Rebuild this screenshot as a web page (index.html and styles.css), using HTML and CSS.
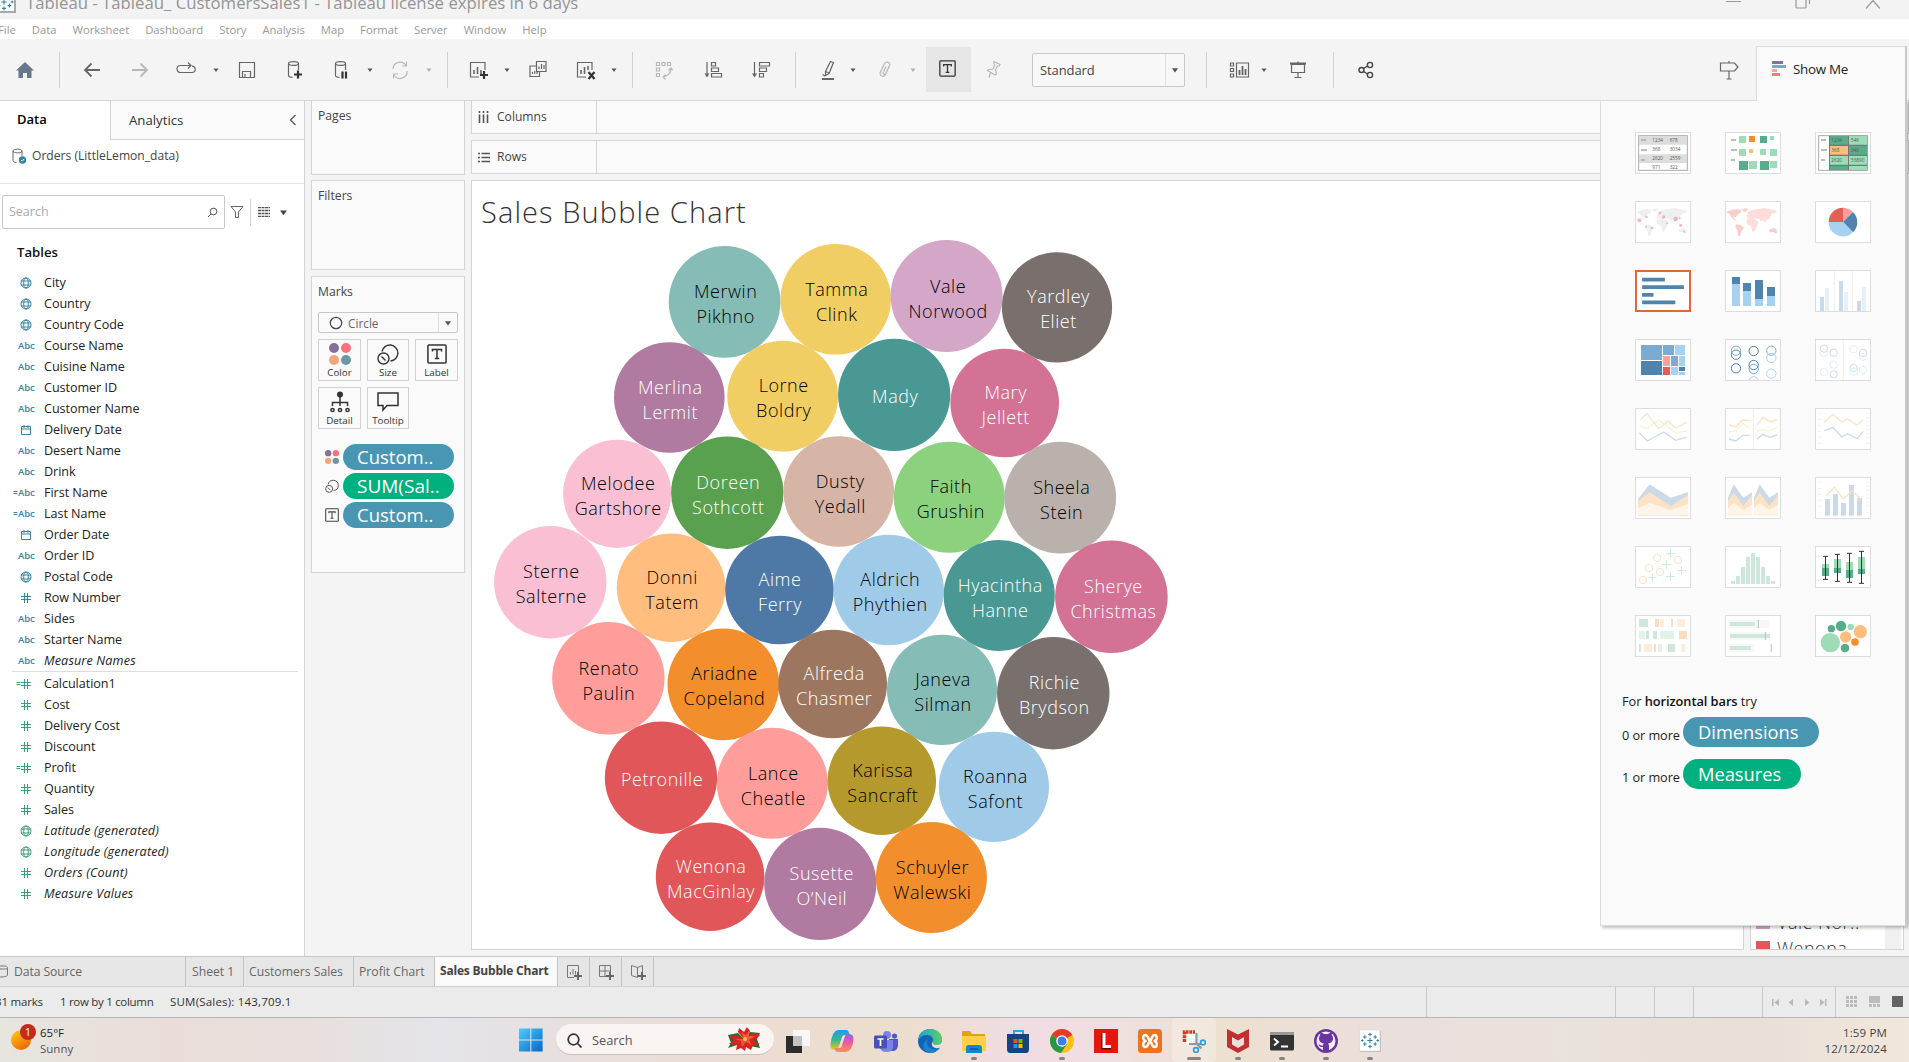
FILE: index.html
```html
<!DOCTYPE html>
<html lang="en">
<head>
<meta charset="utf-8">
<title>Tableau - Sales Bubble Chart</title>
<link rel="stylesheet" href="styles.css">
</head>
<body>
<svg class="defs" aria-hidden="true">
  <symbol id="globe" viewBox="0 0 12 12"><g fill="none" stroke="currentColor"><circle cx="6" cy="6" r="5"/><ellipse cx="6" cy="6" rx="2.3" ry="5"/><path d="M1 4h10M1 8h10"/></g></symbol>
  <symbol id="hash" viewBox="0 0 12 12"><path d="M4.5 1v10M7.5 1v10M1 4.5h10M1 7.5h10" fill="none" stroke="currentColor"/></symbol>
  <symbol id="cal" viewBox="0 0 12 12"><path d="M1.5 2.500h9v8h-9zM1.500 5h9M4 1v3M8 1v3" fill="none" stroke="currentColor"/></symbol>
  <symbol id="tri" viewBox="0 0 8 8"><path d="M1.500 2.500h5L4 6z" fill="currentColor"/></symbol>
  <symbol id="dots4" viewBox="0 0 22 22"><circle cx="5" cy="5" r="5" fill="#857299"/><circle cx="17" cy="5" r="5" fill="#fa7280"/><circle cx="5" cy="17" r="5" fill="#f3a67d"/><circle cx="17" cy="17" r="5" fill="#6d97a2"/></symbol>
  <symbol id="size" viewBox="0 0 22 22"><g fill="none" stroke="currentColor" stroke-width="1.400"><path d="M5 8.500A8 8 0 1 1 13.500 18"/><circle cx="6.500" cy="15.500" r="5.500"/><path d="M4.500 13.500l4 4"/></g></symbol>
  <symbol id="tbox" viewBox="0 0 20 20"><g fill="none" stroke="currentColor" stroke-width="1.500"><rect x="1" y="1" width="18" height="18" rx="1"/><path d="M5.500 7.500V5.500h9v2M10 5.500v9M7.800 14.500h4.400"/></g></symbol>
  <symbol id="tableau" viewBox="0 0 22 22"><g fill="none" stroke="#2f7da6" stroke-width="1.200"><path d="M11 8v6M8 11h6M11 2v4M9 4h4M11 16v4M9 18h4M5 5v4M3 7h4M17 5v4M15 7h4M5 13v4M3 15h4M17 13v4M15 15h4M2 9.500v3M.500 11h3M20 9.500v3M18.500 11h3"/></g></symbol>
</svg>

<header class="titlebar">
  <span class="app-icon"><svg width="20" height="20"><use href="#tableau"/></svg></span>
  <span class="title">Tableau - Tableau_ CustomersSales1 - Tableau license expires in 6 days</span>
  <svg class="win" width="160" height="10" viewBox="0 0 160 10"><g fill="none" stroke="#999" stroke-width="1.200"><path d="M1 1.500h15M71 -2v9q0 1 1 1h8q1 0 1-1v-9M84.500 -2v6M141 8.500l7-8 7 8"/></g></svg>
</header>
<nav class="menubar"><span>File</span><span>Data</span><span>Worksheet</span><span>Dashboard</span><span>Story</span><span>Analysis</span><span>Map</span><span>Format</span><span>Server</span><span>Window</span><span>Help</span></nav>

<div class="toolbar">
  <svg class="tool g13" viewBox="0 0 24 24"><path d="M12 4l9 8.500h-2.500V20h-4.500v-5h-4v5H5.500v-7.500H3z" fill="#67788c"/></svg>
  <i class="sep g22"></i>
  <svg class="tool g20" viewBox="0 0 24 24"><path d="M20 12H5M11.500 5.500L5 12l6.500 6.500" stroke-width="1.800"/></svg>
  <svg class="tool g24 off" viewBox="0 0 24 24"><path d="M4 12h15M12.500 5.500L19 12l-6.500 6.500" stroke-width="1.800"/></svg>
  <svg class="tool g22" viewBox="0 0 24 24"><path d="M17 14.500h1a3.200 3.200 0 0 0 0-6.400M17 7.500H6.500a3.500 3.500 0 0 0 0 7H17M14 4.500l3 3-3 3"/></svg>
  <svg class="caret g14"><use href="#tri"/></svg>
  <svg class="tool g15" viewBox="0 0 24 24"><path d="M4.500 4.500h15v15h-15zM7.500 19v-5.500h8V19M10 19v-3"/></svg>
  <svg class="tool g24" viewBox="0 0 24 24"><path d="M5.500 5.500c0-2.500 10-2.500 10 0s-10 2.500-10 0v12c0 1 2 1.800 4 1.800M15.500 5.500V12"/><path class="bold" d="M11 16.500h8M15 12.500v8"/></svg>
  <svg class="tool g22" viewBox="0 0 24 24"><path d="M6.500 5.500c0-2.500 10-2.500 10 0s-10 2.500-10 0v12c0 1 2 1.800 4 1.800M16.500 5.500V12"/><path class="bold" d="M13.500 13.500v7M17 13.500v7"/></svg>
  <svg class="caret g13"><use href="#tri"/></svg>
  <svg class="tool g14 off" viewBox="0 0 24 24"><path d="M5 11A7 7 0 0 1 18 7.500M19 13a7 7 0 0 1-13 4M18.500 3.500v4.500H14M5.500 20.500V16H10"/></svg>
  <svg class="caret g13 off"><use href="#tri"/></svg>
  <i class="sep g14"></i>
  <svg class="tool g19" viewBox="0 0 24 24"><path d="M18 12V4.500H3.500V19H12"/><path d="M7 16v-4M10.500 16V9M14 16v-4" stroke-width="1.600"/><path class="bold" d="M13 17h8M17 13v8"/></svg>
  <svg class="caret g12"><use href="#tri"/></svg>
  <svg class="tool g15" viewBox="0 0 24 24"><path d="M10.500 3.500h9.500v10h-9.500zM10.500 8H4v10.500h9.500V14M13 11V8.500M15.500 11V6M18 11V7M6.500 16v-2M8.700 16v-3M11 16v-2"/></svg>
  <svg class="tool g24" viewBox="0 0 24 24"><path d="M18 12V4.500H3.500V19H12"/><path d="M7 16v-4M10.500 16V9M14 12V8" stroke-width="1.600"/><path class="bold" d="M14.500 14l6 7M20.500 14l-6 7"/></svg>
  <svg class="caret g12"><use href="#tri"/></svg>
  <i class="sep g14"></i>
  <svg class="tool g20 off" viewBox="0 0 24 24"><path d="M3.500 4.500h3v3h-3zM9 4.500h3v3H9zM14.500 4.500h3v3h-3zM3.500 10h3v3h-3zM3.500 15.500h3v3h-3zM18 10c0 5-3 8-8 9M15.500 12.500L18 10l2 2.500M12.500 16.500L10 19l2.500 2.500"/></svg>
  <svg class="tool g24" viewBox="0 0 24 24"><path d="M6 4v14M10.500 4.500h4v3.500h-4zM10.500 10h7v3.500h-7zM10.500 15.500h10V19h-10z"/><path class="fill" d="M3.500 15.500h5L6 19.500z"/></svg>
  <svg class="tool g24" viewBox="0 0 24 24"><path d="M5.500 4v14M10.500 4.500h10V8h-10zM10.500 10h7v3.500h-7zM10.500 15.500h4V19h-4z"/><path class="fill" d="M3 15.500h5l-2.500 4z"/></svg>
  <i class="sep g22"></i>
  <svg class="tool g20" viewBox="0 0 24 24"><path d="M14.500 3.500l3 1-4.500 11-3.500 2v-4zM9.500 13.500l3.500 1.500M6.500 16.500l2.500 1.500"/><path class="fill" d="M6 20h12v2H6z"/></svg>
  <svg class="caret g9"><use href="#tri"/></svg>
  <svg class="tool g16 off" viewBox="0 0 24 24"><path d="M16 9l-4 8.500a3 3 0 0 1-5-2.500l4.500-9.500a3 3 0 0 1 5.500 1l-4.500 9.500a1.600 1.600 0 0 1-2.500-1l3-6.500"/></svg>
  <svg class="caret g12 off"><use href="#tri"/></svg>
  <div class="tbtn g9"><svg width="17" height="17"><use href="#tbox"/></svg></div>
  <svg class="tool g10 off" viewBox="0 0 24 24"><path d="M13 3.500l6 3-1 1.500-1.500 0-2 4 1 4-1.500 1-7.500-4.500 1.500-1 4-.500 1.800-4-.800-1.500zM9.500 14.500L8 19.500"/></svg>
  <div class="select g27"><span>Standard</span><i><svg width="10" height="10"><use href="#tri"/></svg></i></div>
  <i class="sep g21"></i>
  <svg class="tool g20" viewBox="0 0 24 24"><path d="M3.500 5h3v3h-3zM3.500 10.500h3v3h-3zM3.500 16h3v3h-3zM9.500 5h12v14h-12z"/><path d="M12.500 17v-5M15.500 17V8M18.500 17v-6" stroke-width="1.800"/></svg>
  <svg class="caret g9"><use href="#tri"/></svg>
  <svg class="tool g18" viewBox="0 0 24 24"><path d="M4 5.500h16" stroke-width="2"/><path d="M5.500 6.500h13v8h-13zM12 3.500v2M12 14.500v5M8.500 19.500h7"/></svg>
  <i class="sep g23"></i>
  <svg class="tool g20 dark" viewBox="0 0 24 24"><circle cx="7.500" cy="12" r="2.500"/><circle cx="16" cy="7" r="2.600"/><circle cx="16" cy="17" r="2.600"/><path d="M9.500 10.500l4-2.500M9.500 13.500l4 2.500"/></svg>
  <svg class="tool push" viewBox="0 0 24 24"><path d="M3.500 5h14l3.500 4-3.500 4H3.500zM12 3v2M12 13v8M9.500 21h5"/></svg>
  <div class="showme-tab g15"><svg width="15" height="16" viewBox="0 0 15 16"><path d="M0 0h11v3H0z" fill="#857299"/><path d="M0 4h14v3H0z" fill="#7fa6cf"/><path d="M0 8h5v3H0z" fill="#f7a98a"/><path d="M0 12h8v3H0z" fill="#fa7280"/></svg>Show Me</div>
</div>

<main class="workspace">
  <aside class="sidebar">
    <div class="side-tabs"><b>Data</b><span>Analytics<svg width="8" height="12" viewBox="0 0 8 12"><path d="M6.500 1L1.500 6l5 5" fill="none" stroke="#555" stroke-width="1.300"/></svg></span></div>
    <div class="source"><svg width="15" height="16" viewBox="0 0 15 16"><path d="M1 3c0-2.500 9-2.500 9 0s-9 2.500-9 0v9.500c0 1.300 1.500 1.800 3.500 2M10 3v5" fill="none" stroke="#666"/><circle cx="10.500" cy="12" r="3.700" fill="#3683a5"/><path d="M9 12l1.200 1.200 2-2.400" fill="none" stroke="#fff"/></svg>Orders (LittleLemon_data)</div>
    <div class="search-row">
      <div class="search">Search<svg width="11" height="11" viewBox="0 0 11 11"><g fill="none" stroke="#555"><circle cx="6.500" cy="4.500" r="3.300"/><path d="M4 7L1 10"/></g></svg></div>
      <svg width="14" height="14" viewBox="0 0 14 14"><path d="M1 1.500h12L8.500 7v5.500h-3V7z" fill="none" stroke="#666"/></svg>
      <i></i>
      <svg width="13" height="10" viewBox="0 0 13 10"><path d="M0 .500h12M0 3.500h12M0 6.500h12M0 9.500h12" stroke="#555" stroke-width="1.300" stroke-dasharray="3 .5" fill="none"/></svg>
      <svg class="dd" width="11" height="11"><use href="#tri"/></svg>
    </div>
    <h2>Tables</h2>
    <ul class="fields dims">
      <li><svg><use href="#globe"/></svg>City</li>
      <li><svg><use href="#globe"/></svg>Country</li>
      <li><svg><use href="#globe"/></svg>Country Code</li>
      <li><b>Abc</b>Course Name</li>
      <li><b>Abc</b>Cuisine Name</li>
      <li><b>Abc</b>Customer ID</li>
      <li><b>Abc</b>Customer Name</li>
      <li><svg><use href="#cal"/></svg>Delivery Date</li>
      <li><b>Abc</b>Desert Name</li>
      <li><b>Abc</b>Drink</li>
      <li><u>=</u><b>Abc</b>First Name</li>
      <li><u>=</u><b>Abc</b>Last Name</li>
      <li><svg><use href="#cal"/></svg>Order Date</li>
      <li><b>Abc</b>Order ID</li>
      <li><svg><use href="#globe"/></svg>Postal Code</li>
      <li><svg><use href="#hash"/></svg>Row Number</li>
      <li><b>Abc</b>Sides</li>
      <li><b>Abc</b>Starter Name</li>
      <li><b>Abc</b><em>Measure Names</em></li>
    </ul>
    <ul class="fields measures">
      <li><u>=</u><svg><use href="#hash"/></svg>Calculation1</li>
      <li><svg><use href="#hash"/></svg>Cost</li>
      <li><svg><use href="#hash"/></svg>Delivery Cost</li>
      <li><svg><use href="#hash"/></svg>Discount</li>
      <li><u>=</u><svg><use href="#hash"/></svg>Profit</li>
      <li><svg><use href="#hash"/></svg>Quantity</li>
      <li><svg><use href="#hash"/></svg>Sales</li>
      <li><svg><use href="#globe"/></svg><em>Latitude (generated)</em></li>
      <li><svg><use href="#globe"/></svg><em>Longitude (generated)</em></li>
      <li><svg><use href="#hash"/></svg><em>Orders (Count)</em></li>
      <li><svg><use href="#hash"/></svg><em>Measure Values</em></li>
    </ul>
  </aside>

  <section class="cards">
    <div class="card pages">Pages</div>
    <div class="card filters">Filters</div>
    <div class="card marks">Marks
      <div class="mark-type"><svg width="14" height="14" viewBox="0 0 14 14"><circle cx="7" cy="7" r="5.700" fill="none" stroke="#444" stroke-width="1.200"/></svg><span>Circle</span><i><svg width="10" height="10"><use href="#tri"/></svg></i></div>
      <div class="mark-grid">
        <div><svg><use href="#dots4"/></svg>Color</div>
        <div><svg><use href="#size"/></svg>Size</div>
        <div><svg viewBox="-1 -1 24 24"><use href="#tbox" x="0" y="0" width="22" height="22"/></svg>Label</div>
        <div><svg viewBox="0 0 22 22"><circle cx="11" cy="3.500" r="3" fill="#333"/><path d="M11 6v9M3.500 15v-3.500h15V15" fill="none" stroke="#333" stroke-width="1.500"/><g fill="none" stroke="#333" stroke-width="1.500"><circle cx="3.500" cy="19" r="1.600"/><circle cx="11" cy="19" r="1.600"/><circle cx="18.500" cy="19" r="1.600"/></g></svg>Detail</div>
        <div><svg viewBox="0 0 22 22"><path d="M1 2h20v12.500H10L6 19v-4.500H1z" fill="none" stroke="#333" stroke-width="1.500"/></svg>Tooltip</div>
      </div>
      <div class="pill-row"><svg><use href="#dots4"/></svg><span class="pill">Custom..</span></div>
      <div class="pill-row"><svg><use href="#size"/></svg><span class="pill green">SUM(Sal..</span></div>
      <div class="pill-row"><svg><use href="#tbox"/></svg><span class="pill">Custom..</span></div>
    </div>
  </section>

  <section class="canvas">
    <div class="shelf"><div><svg width="11" height="12" viewBox="0 0 11 12"><path d="M1.500 0v2M5.500 0v2M9.500 0v2M1.500 3.500V12M5.500 3.500V12M9.500 3.500V12" stroke="#555" stroke-width="1.600"/></svg>Columns</div></div>
    <div class="shelf"><div><svg width="12" height="11" viewBox="0 0 12 11"><path d="M0 1.500h2M0 5.500h2M0 9.500h2M3.500 1.500H12M3.500 5.500H12M3.500 9.500H12" stroke="#555" stroke-width="1.600"/></svg>Rows</div></div>
    <div class="view-row">
      <div class="view">
        <h1>Sales Bubble Chart</h1>
        <svg class="bubbles" width="700" height="710" viewBox="480 235 700 710">
          <g class="d" transform="translate(724.600 301.800)"><circle r="55.900" fill="#86bcb6"/><text x="1" y="-3.500">Merwin</text><text x="1" y="21.500">Pikhno</text></g>
          <g class="d" transform="translate(835.700 299.300)"><circle r="55.300" fill="#f1ce63"/><text x="1" y="-3.500">Tamma</text><text x="1" y="21.500">Clink</text></g>
          <g class="d" transform="translate(946.600 296)"><circle r="56" fill="#d4a6c8"/><text x="1.500" y="-3.500">Vale</text><text x="1.500" y="21.500">Norwood</text></g>
          <g class="l" transform="translate(1057 307.300)"><circle r="55.100" fill="#79706e"/><text x="1.500" y="-4">Yardley</text><text x="1.500" y="21">Eliet</text></g>
          <g class="l" transform="translate(669.300 397.500)"><circle r="55.300" fill="#b07aa1"/><text x="1" y="-3.500">Merlina</text><text x="1" y="21.500">Lermit</text></g>
          <g class="d" transform="translate(782.700 396.200)"><circle r="55.400" fill="#f1ce63"/><text x="1" y="-4">Lorne</text><text x="1" y="21">Boldry</text></g>
          <g class="l" transform="translate(894.200 394.800)"><circle r="56.100" fill="#499894"/><text x="1" y="8.500">Mady</text></g>
          <g class="l" transform="translate(1004.700 403)"><circle r="54.300" fill="#d37295"/><text x="1" y="-4">Mary</text><text x="1" y="21">Jellett</text></g>
          <g class="d" transform="translate(617.200 493.800)"><circle r="54.100" fill="#fabfd2"/><text x="1" y="-3.500">Melodee</text><text x="1" y="21.500">Gartshore</text></g>
          <g class="l" transform="translate(727.300 492.700)"><circle r="56.200" fill="#59a14f"/><text x="1" y="-3.500">Doreen</text><text x="1" y="21.500">Sothcott</text></g>
          <g class="d" transform="translate(838.700 491.500)"><circle r="55.300" fill="#d7b5a6"/><text x="1.500" y="-3.500">Dusty</text><text x="1.500" y="21.500">Yedall</text></g>
          <g class="d" transform="translate(949.300 497.200)"><circle r="55.500" fill="#8cd17d"/><text x="1.500" y="-4">Faith</text><text x="1.500" y="21">Grushin</text></g>
          <g class="d" transform="translate(1060.200 497.700)"><circle r="55.900" fill="#bab0ac"/><text x="1.500" y="-3.500">Sheela</text><text x="1.500" y="21.500">Stein</text></g>
          <g class="d" transform="translate(550.300 582.200)"><circle r="56.200" fill="#fabfd2"/><text x="1" y="-4">Sterne</text><text x="1" y="21">Salterne</text></g>
          <g class="d" transform="translate(671.100 587.700)"><circle r="54.300" fill="#ffbe7d"/><text x="1" y="-3.500">Donni</text><text x="1" y="21.500">Tatem</text></g>
          <g class="l" transform="translate(779.500 590)"><circle r="54.300" fill="#4e79a7"/><text x=".5" y="-4">Aime</text><text x=".5" y="21">Ferry</text></g>
          <g class="d" transform="translate(888.700 590)"><circle r="55.200" fill="#a0cbe8"/><text x="1.500" y="-4">Aldrich</text><text x="1.500" y="21">Phythien</text></g>
          <g class="l" transform="translate(999.200 595.500)"><circle r="55.600" fill="#499894"/><text x="1" y="-3.500">Hyacintha</text><text x="1" y="21.500">Hanne</text></g>
          <g class="l" transform="translate(1111.400 596.800)"><circle r="56.300" fill="#d37295"/><text x="2" y="-3.500">Sherye</text><text x="2" y="21.500">Christmas</text></g>
          <g class="d" transform="translate(608.400 678.300)"><circle r="56.200" fill="#ff9d9a"/><text x=".5" y="-3.500">Renato</text><text x=".5" y="21.500">Paulin</text></g>
          <g class="d" transform="translate(723.400 684.300)"><circle r="55.900" fill="#f28e2b"/><text x="1" y="-4">Ariadne</text><text x="1" y="21">Copeland</text></g>
          <g class="l" transform="translate(832.700 684)"><circle r="54.300" fill="#9d7660"/><text x="1.500" y="-4">Alfreda</text><text x="1.500" y="21">Chasmer</text></g>
          <g class="d" transform="translate(942 689.800)"><circle r="55.100" fill="#86bcb6"/><text x="1" y="-3.500">Janeva</text><text x="1" y="21.500">Silman</text></g>
          <g class="l" transform="translate(1053.300 693.200)"><circle r="56.200" fill="#79706e"/><text x="1" y="-4">Richie</text><text x="1" y="21">Brydson</text></g>
          <g class="l" transform="translate(661 777.700)"><circle r="56.200" fill="#e15759"/><text x="1" y="8.500">Petronille</text></g>
          <g class="d" transform="translate(772.300 783.300)"><circle r="55.500" fill="#ff9d9a"/><text x="1" y="-3.500">Lance</text><text x="1" y="21.500">Cheatle</text></g>
          <g class="d" transform="translate(881.800 780.700)"><circle r="54.300" fill="#b6992d"/><text x="1" y="-3.500">Karissa</text><text x="1" y="21.500">Sancraft</text></g>
          <g class="d" transform="translate(993.900 786.800)"><circle r="55.100" fill="#a0cbe8"/><text x="1.500" y="-3.500">Roanna</text><text x="1.500" y="21.500">Safont</text></g>
          <g class="l" transform="translate(710.100 876.700)"><circle r="54.300" fill="#e15759"/><text x="1" y="-3.500">Wenona</text><text x="1" y="21.500">MacGinlay</text></g>
          <g class="l" transform="translate(820.300 883.800)"><circle r="56.100" fill="#b07aa1"/><text x="1.500" y="-3.500">Susette</text><text x="1.500" y="21.500">O’Neil</text></g>
          <g class="d" transform="translate(931.400 877.500)"><circle r="55.500" fill="#f28e2b"/><text x="1" y="-3.500">Schuyler</text><text x="1" y="21.500">Walewski</text></g>
        </svg>
      </div>
      <div class="legend">
        <div class="legend-list"><p><i class="sw-vale"></i>Vale Nor..</p><p><i class="sw-wen"></i>Wenona</p></div>
        <div class="scroll"></div>
      </div>
    </div>
  </section>

  <aside class="showme">
    <div class="thumbs">
      <svg viewBox="3 3 162 120"><rect x="11" y="11" width="146" height="104" fill="#fff" stroke="#aaa" stroke-width="3"/><path d="M12 12h144v26H12zM12 67h144v26H12z" fill="#ddd"/><path d="M18 24h15M18 54h18M18 84h12" stroke="#aaa" stroke-width="5"/><g class="tiny"><text x="52" y="31">1234</text><text x="104" y="31">678</text><text x="52" y="58">368</text><text x="104" y="58">3034</text><text x="52" y="85">2620</text><text x="104" y="85">2559</text><text x="52" y="110">971</text><text x="104" y="110">322</text></g></svg>
      <svg viewBox="3 3 162 120"><path d="M18 24h15M18 54h18M18 84h12" stroke="#bbb" stroke-width="6"/><path d="M42 12h21v21H42zM135 12h12v12h-12zM42 51h21v21H42zM105 51h18v18h-18zM135 51h21v21h-21zM72 87h24v24H72zM135 87h21v21h-21z" fill="#9edcb6"/><path d="M105 12h21v21h-21zM42 87h27v27H42zM105 87h27v27h-27z" fill="#57ac8a"/><path d="M72 12h18v18H72z" fill="#f28e2b"/><path d="M72 51h12v12H72z" fill="#ffbe7d"/></svg>
      <svg viewBox="3 3 162 120"><rect x="11" y="11" width="146" height="104" fill="#fff" stroke="#aaa" stroke-width="3"/><path d="M18 24h15M18 54h18M18 84h12" stroke="#bbb" stroke-width="6"/><path d="M42 11h115v104H42z" fill="#777"/><path d="M45 12h54v26H45zM102 42h54v26h-54zM45 102h54v12H45z" fill="#57ac8a"/><path d="M102 12h54v26h-54zM45 72h54v26H45zM102 72h54v26h-54zM102 102h54v12h-54z" fill="#9edcb6"/><path d="M45 42h54v26H45z" fill="#ffbe7d"/><g class="tiny"><text x="49" y="30">1234</text><text x="108" y="30">546</text><text x="49" y="61">368</text><text x="108" y="61">340</text><text x="49" y="91">2620</text><text x="108" y="91">53890</text></g></svg>

      <svg viewBox="3 3 162 120"><path d="M5 33l15-7 17-2 12 3-2 8-8 4-6 9-9 0 7 8 6 5-6-2-11-9-6-12-8-2zM50 24l16-2 4 3-9 8-6-2zM34 70l12 2 11 8-7 10-5 14-5 2-3-18-6-10z" fill="#efefef"/><path d="M69 33l12-6 18-3 20-3 18 4 19 4-4 7-13 3-6 15-8 2-3 7-5-1-4-8-5 9-5-8-13-4-6 3-8-1-6-3-6 3zM68 53l15-1 9 4 8 7-4 13-6 12-7 6-5-19-10-5-4-9zM132 86l15-6 8 6 1 9-5 2-6-4-12 1z" fill="#efefef"/><g fill="#e8929b" opacity=".6"><circle cx="13" cy="58" r="6"/><circle cx="75" cy="36" r="4"/><circle cx="86" cy="48" r="5"/><circle cx="122" cy="54" r="7"/><circle cx="137" cy="73" r="5"/><circle cx="33" cy="77" r="3"/><circle cx="51" cy="81" r="4"/><circle cx="96" cy="67" r="3"/><circle cx="134" cy="52" r="3"/><circle cx="147" cy="92" r="3"/><circle cx="34" cy="48" r="4"/></g></svg>
      <svg viewBox="3 3 162 120"><path d="M5 33l15-7 17-2 12 3-2 8-8 4-6 9-9 0 7 8 6 5-6-2-11-9-6-12-8-2zM50 24l16-2 4 3-9 8-6-2zM34 70l12 2 11 8-7 10-5 14-5 2-3-18-6-10zM132 86l15-6 8 6 1 9-5 2-6-4-12 1z" fill="#f9cdc9"/><path d="M69 33l12-6 18-3 20-3 18 4 19 4-4 7-13 3-6 15-8 2-3 7-5-1-4-8-5 9-5-8-13-4-6 3-8-1-6-3-6 3zM68 53l15-1 9 4 8 7-4 13-6 12-7 6-5-19-10-5-4-9z" fill="#fddcd9"/></svg>
      <svg viewBox="3 3 162 120"><path d="M84 63V20a43 43 0 0 0-43 43z" fill="#e16158"/><path d="M84 63V20a43 43 0 0 1 30 13z" fill="#ff9d9a"/><path d="M84 63l30-30a43 43 0 0 1 0 61z" fill="#4f84ae"/><path d="M84 63l30 31a43 43 0 0 1-73-31z" fill="#a6d1f0"/></svg>

      <svg class="on" viewBox="3 3 162 120"><path d="M18 21h72v12H18zM18 45h132v12H18zM18 69h36v12H18zM18 93h105v12H18z" fill="#4f84ae"/></svg>
      <svg viewBox="3 3 162 120"><path d="M21 42h24v66H21zM54 63h24v45H54zM90 87h24v21H90zM126 78h24v30h-24z" fill="#a6d1f0"/><path d="M21 21h24v21H21zM54 39h24v24H54zM90 30h24v57H90zM126 51h24v27h-24z" fill="#4f84ae"/></svg>
      <svg viewBox="3 3 162 120"><path d="M58 0v126M112 0v126" stroke="#eee" stroke-width="3"/><path d="M15 81h12v45H15zM72 33h12v93H72zM126 93h12v33h-12z" fill="#cbdae8"/><path d="M30 54h12v72H30zM87 66h12v60H87zM141 51h12v75h-12z" fill="#e3f1fd"/></svg>

      <svg viewBox="3 3 162 120"><path d="M18 18h63v45H18zM84 18h33v30H84zM108 51h21v30h-21z" fill="#7daacf"/><path d="M18 66h63v42H18zM132 84h18v12h-18z" fill="#4f84ae"/><path d="M120 18h30v30h-30zM132 51h18v30h-18zM108 84h21v24h-21zM132 99h18v9h-18z" fill="#a6d1f0"/><path d="M84 51h21v30H84z" fill="#ffa09c"/><path d="M84 84h21v24H84z" fill="#e15f58"/></svg>
      <svg viewBox="3 3 162 120"><g class="rings"><g stroke="#7daacf"><circle cx="33" cy="35" r="14"/><circle cx="86" cy="90" r="14"/><circle cx="139" cy="35" r="14"/></g><g stroke="#4f84ae"><circle cx="33" cy="47" r="14"/><circle cx="33" cy="88" r="14"/><circle cx="86" cy="36" r="14"/><circle cx="86" cy="78" r="14"/></g><g stroke="#a6d1f0"><circle cx="139" cy="57" r="14"/><circle cx="139" cy="104" r="14"/><circle cx="86" cy="127" r="14"/></g></g></svg>
      <svg viewBox="3 3 162 120"><path d="M85 0v126" stroke="#eee" stroke-width="3"/><g class="rings" stroke="#cbdae8"><circle cx="27" cy="29" r="11"/><circle cx="56" cy="41" r="11"/><circle cx="56" cy="106" r="11"/><circle cx="144" cy="42" r="11"/><circle cx="116" cy="87" r="11"/></g><g class="rings" stroke="#e0effb"><circle cx="27" cy="42" r="11"/><circle cx="56" cy="77" r="11"/><circle cx="27" cy="99" r="11"/><circle cx="116" cy="31" r="11"/><circle cx="144" cy="53" r="11"/><circle cx="144" cy="93" r="11"/><circle cx="116" cy="98" r="11"/></g></svg>

      <svg viewBox="3 3 162 120"><g class="lines"><path d="M13 53l24 9 34-27 51 40 33-6" stroke="#fdf0d5"/><path d="M16 35l20-18 35 45 29-23 22 21 32-17" stroke="#fde2c5"/><path d="M13 75l24 24 49-27 36 25 32-9" stroke="#cbdae8"/></g></svg>
      <svg viewBox="3 3 162 120"><path d="M85 0v126" stroke="#eee" stroke-width="3"/><g class="lines"><path d="M12 72l20-3 21-23 20 14M96 70l17-6 20 5 24-12" stroke="#fdf0d5"/><path d="M12 51l22 5 18-20 22 2M96 51l18-23 20 13 22-5" stroke="#fde2c5"/><path d="M12 93l20 6 22-17h20M96 93l18-14 20 9 22-7" stroke="#cbdae8"/></g></svg>
      <svg viewBox="3 3 162 120"><path d="M9 16h9M9 34h9M9 52h9M9 70h9M9 88h9M9 106h9M153 16h9M153 28h9M153 40h9M153 52h9M153 64h9M153 76h9M153 88h9M153 106h9" stroke="#eee" stroke-width="3"/><g class="lines"><path d="M27 43l27-24 27 23 17-10 28 19 19-16" stroke="#fde2c5"/><path d="M27 69l27-11 26 29 18-10 28 15 19-22" stroke="#cbdae8"/></g></svg>

      <svg viewBox="3 3 162 120"><path d="M9 66l35-44 63 40 52-16v70H9z" fill="#cbdae8"/><path d="M9 72l35-26 63 41 52-33v61H9z" fill="#fde2c5"/><path d="M9 93l35-15 63 21 52-18v34H9z" fill="#fef5e8"/></svg>
      <svg viewBox="3 3 162 120"><path d="M9 62l17-40 29 40 26-16v69H9zM87 62l17-40 29 40 26-16v69H87z" fill="#cbdae8"/><path d="M9 72l17-26 29 41 26-33v61H9zM87 72l17-26 29 41 26-33v61H87z" fill="#fde2c5"/><path d="M9 93l17-15 29 21 26-16v32H9zM87 93l17-15 29 21 26-16v32H87z" fill="#fef5e8"/></svg>
      <svg viewBox="3 3 162 120"><path d="M9 16h9M9 34h9M9 52h9M9 70h9M9 88h9M9 106h9M153 16h9M153 28h9M153 40h9M153 52h9M153 64h9M153 76h9M153 88h9M153 106h9" stroke="#eee" stroke-width="3"/><path d="M30 66h15v50H30zM54 51h15v65H54zM78 78h15v38H78zM102 24h15v92h-15zM126 63h15v53h-15z" fill="#cbdae8"/><g class="lines"><path d="M33 56l26-26 26 37 26-26 27 26" stroke="#fde2c5"/></g></svg>

      <svg viewBox="3 3 162 120"><g class="rings" stroke="#fde2c5"><circle cx="66" cy="36" r="11"/><circle cx="129" cy="42" r="11"/><circle cx="42" cy="66" r="11"/><circle cx="75" cy="78" r="11"/><circle cx="24" cy="102" r="11"/></g><path d="M93 23h27M106 9v27M81 56h27M94 42v27M126 74h27M139 60v27M39 95h27M52 81v27M93 92h27M106 78v27" stroke="#cde7db" stroke-width="3"/></svg>
      <svg viewBox="3 3 162 120"><path d="M18 105h12v9H18zM33 90h12v24H33zM48 63h12v51H48zM63 33h12v81H63zM78 21h12v93H78zM93 33h12v81H93zM108 63h12v51h-12zM123 90h12v24h-12zM138 105h12v9h-12z" fill="#cde7db"/></svg>
      <svg viewBox="3 3 162 120"><path d="M21 54h21v12H21zM57 39h21v27H57zM93 48h21v24H93zM129 33h21v36h-21z" fill="#9edcb6"/><path d="M21 66h21v24H21zM57 66h21v15H57zM93 72h21v24H93zM129 69h21v15h-21z" fill="#57ac8a"/><path d="M31.500 31v69M24 31h15M24 100h15M67.500 25v81M60 25h15M60 106h15M103.500 22v87M96 22h15M96 109h15M139.500 16v96M132 16h15M132 112h15" stroke="#333" stroke-width="3"/></svg>

      <svg viewBox="3 3 162 120"><path d="M12 12h27v24H12zM33 48h9v24h-9zM54 48h12v24H54zM12 87h6v24h-6zM99 87h21v24H99z" fill="#cde7db"/><path d="M12 48h18v24H12zM75 48h42v24H75zM69 87h12v24H69z" fill="#e2f3e9"/><path d="M60 12h12v24H60zM108 12h6v24h-6zM132 48h24v24h-24zM57 87h6v24h-6z" fill="#fcdcc0"/><path d="M75 12h12v24H75zM126 12h24v24h-24zM27 87h24v24H27zM138 87h12v24h-12z" fill="#feecd9"/></svg>
      <svg viewBox="3 3 162 120"><path d="M15 15h120v24H15zM15 51h120v24H15zM15 87h75v24H15z" fill="#f7f7f7"/><path d="M15 21h75v12H15zM15 57h120v12H15zM15 93h63v12H15z" fill="#cde7db"/><path d="M100 15v24M121 51v24M139 87v24" stroke="#bbb" stroke-width="3"/></svg>
      <svg viewBox="3 3 162 120"><g fill="#57ac8a"><circle cx="49" cy="41" r="11"/><circle cx="78" cy="33" r="15.500"/><circle cx="90" cy="99" r="13"/></g><g fill="#9edcb6"><circle cx="46" cy="83" r="29"/><circle cx="107" cy="36" r="9.500"/></g><g fill="#ffbe7d"><circle cx="92" cy="66" r="17"/><circle cx="136" cy="50" r="20"/></g><circle cx="120" cy="81" r="11.500" fill="#f28e2b"/></svg>
    </div>
    <p class="hint">For <b>horizontal bars</b> try</p>
    <p class="need"><span>0 or more</span><span class="pill big">Dimensions</span></p>
    <p class="need"><span>1 or more</span><span class="pill big green ms">Measures</span></p>
  </aside>
</main>

<nav class="sheets">
  <span class="ds"><svg width="8" height="13" viewBox="0 0 8 13"><path d="M0 1h4c4 0 4 2 3.500 2.500S6 4 0 4M7.500 3v7c0 1-2 2-7.500 2" fill="none" stroke="#777"/></svg>Data Source</span><span class="s1">Sheet 1</span><span class="s2">Customers Sales</span><span class="s3">Profit Chart</span><b>Sales Bubble Chart</b>
  <span class="add"><svg viewBox="0 0 16 16"><path d="M12.500 8V1.500H1.500v12H8M4.500 10.500V8M7 10.500V5M9.500 10.500V7"/><path class="bold" d="M8 12h8M12 8v8"/></svg></span>
  <span class="add"><svg viewBox="0 0 16 16"><path d="M12.500 8V1.500H1.500v11H8M7 1.500v11M1.500 7h11"/><path class="bold" d="M8 12h8M12 8v8"/></svg></span>
  <span class="add"><svg viewBox="0 0 16 16"><path d="M12.500 8V1.500l-5 2-6-2v10l6 2v-10"/><path class="bold" d="M8 12h8M12 8v8"/></svg></span>
</nav>
<footer class="status">
  <span>31 marks</span><span class="rowcol">1 row by 1 column</span><span class="sum">SUM(Sales): 143,709.1</span>
  <div class="status-right">
    <i class="w189"></i><i class="w39"></i><i class="w39"></i><i class="w68"></i>
    <div class="nav"><svg width="55" height="9" viewBox="0 0 55 9"><path d="M0 1h1.500v7H0zM7 1v7L2.500 4.500zM21 1v7l-4.500-3.500zM33 1v7l4.500-3.500zM48 1v7l4.500-3.500zM53 1h1.500v7H53z" fill="#b8b8b8"/></svg></div>
    <div class="modes"><svg width="58" height="12" viewBox="0 0 58 12"><path d="M0 0h3v3H0zM4 0h3v3H4zM8 0h3v3H8zM0 4h3v3H0zM4 4h3v3H4zM8 4h3v3H8zM0 8h3v3H0zM4 8h3v3H4zM8 8h3v3H8zM23 0h11v7H23zM23 8h3v3h-3zM27 8h3v3h-3zM31 8h3v3h-3z" fill="#bbb"/><path d="M46 0h11v11H46z" fill="#636363"/></svg></div>
  </div>
</footer>

<div class="taskbar">
  <div class="weather"><svg width="27" height="30" viewBox="0 0 27 30"><defs><linearGradient id="sun" x1="0" y1="0" x2=".6" y2="1"><stop offset="0" stop-color="#ffcf15"/><stop offset="1" stop-color="#ec6a08"/></linearGradient></defs><circle cx="10" cy="17" r="10" fill="url(#sun)"/><circle cx="17" cy="9" r="8" fill="#c42b1c"/><text x="17" y="13" text-anchor="middle" font-size="11" fill="#fff">1</text></svg><div>65°F<br><span>Sunny</span></div></div>
  <svg class="start" width="24" height="24" viewBox="0 0 24 24"><defs><linearGradient id="win" x1="0" y1="0" x2="1" y2="1"><stop offset="0" stop-color="#51cdfb"/><stop offset="1" stop-color="#0067c8"/></linearGradient></defs><path d="M0 .500h11.300v11H0zM12.300.500h11.300v11H12.300zM0 12.500h11.300v11H0zM12.300 12.500h11.300v11H12.300z" fill="url(#win)"/></svg>
  <div class="tsearch"><svg width="15" height="15" viewBox="0 0 15 15"><g fill="none" stroke="#333" stroke-width="1.700"><circle cx="6.500" cy="6.500" r="5.300"/><path d="M10.500 10.500l4 4"/></g></svg>Search
    <svg class="flower" width="36" height="24" viewBox="0 0 36 24"><path d="M2 8l10-2 6 6-7 6-9 3 3-5zM24 5l10 1-3 6 3 9-10-2-6-7z" fill="#2c6a35"/><path d="M18 12L12 5l1-4 5 4 3-5 3 4-2 5 7-3 5 2-6 6 6 3-7 1-2 5-5-3-1 4-4-3-5 2 1-5-8-1 5-4-5-4 7-1z" fill="#d8231f"/><path d="M18 12l-3-7 5 3 3-4 0 5 6 0-6 4 3 5-6-3-4 5-1-6-6-2z" fill="#f4553f"/><circle cx="19" cy="12" r="2" fill="#e8c13a"/></svg></div>
  <div class="apps">
    <div><svg viewBox="0 0 24 24"><path d="M0 7h16v17H0z" fill="#2c2c2c"/><path d="M7 1h17v16H7z" fill="#f7f7f7"/><path d="M7 7h9v10H7z" fill="#c2c2c2"/></svg></div>
    <div><svg viewBox="0 0 24 24"><defs><linearGradient id="c1" x1="0" y1="0" x2="0" y2="1"><stop offset="0" stop-color="#1d9bf0"/><stop offset=".5" stop-color="#36b98a"/><stop offset="1" stop-color="#f5c518"/></linearGradient><linearGradient id="c2" x1="0" y1="0" x2="0" y2="1"><stop offset="0" stop-color="#9a5cf0"/><stop offset=".5" stop-color="#ee5aa0"/><stop offset="1" stop-color="#ff9348"/></linearGradient></defs><path d="M8 1h8q3 0 3.500 5h-5q-2 0-2.500 2L9 17q-1 4-4 4-5 0-4.500-6Q2 2 8 1z" fill="url(#c1)"/><path d="M16 23H8q-3 0-3.500-4h5q2 0 2.500-3l3-9q1-3 4-2 5 0 4.500 6Q22 22 16 23z" fill="url(#c2)"/></svg></div>
    <div><svg viewBox="0 0 24 24"><circle cx="13" cy="6" r="4" fill="#7b83eb"/><circle cx="20.500" cy="7" r="2.600" fill="#5059c9"/><path d="M15 10h9v7q-1 5-5 5h-4z" fill="#5059c9"/><path d="M6 11h13v7q0 5-6.500 5T6 18z" fill="#7b83eb"/><rect y="6.500" width="13" height="13" rx="1.500" fill="#4650b8"/><path d="M3.500 10h6M6.500 10v7" stroke="#fff" stroke-width="1.700"/></svg></div>
    <div><svg viewBox="0 0 24 24"><defs><linearGradient id="e1"><stop offset="0" stop-color="#1ea0dc"/><stop offset="1" stop-color="#5ccf66"/></linearGradient></defs><circle cx="12" cy="12" r="12" fill="#1165b3"/><path d="M0 12C1 4 6 0 12 0c7 0 12 4 12 10 0 4-3 6-6 6-4 0-4-2-3-4 1-3-2-6-6-6-5 0-8 3-9 6z" fill="url(#e1)"/><path d="M9 13c0 6 5 8 9 7l3-1c-3 5-8 6-12 4-5-3-5-11 2-13-1 1-2 2-2 3z" fill="#1b84cf"/><path d="M15 12c-1 2 0 4 3 4 3 0 5-1 6-4v6l-3 1c-6 1-9-3-6-7z" fill="#ecdfd3"/></svg></div>
    <div class="run"><svg viewBox="0 0 24 24"><path d="M0 3q0-1 1-1h7l2 3h13v16q0 1-1 1H1q-1 0-1-1z" fill="#e2a313"/><path d="M0 7h24v15H0z" fill="#ffcf48"/><path d="M4 24v-5q0-3 3-3h10q3 0 3 3v5z" fill="#1484d6"/><path d="M8 20h8" stroke="#0a5499" stroke-width="1.500"/></svg></div>
    <div><svg viewBox="0 0 24 24"><path d="M8 6V2h9v4" fill="none" stroke="#2aa6e8" stroke-width="2"/><path d="M1 5h22v15q0 4-3 4H4q-3 0-3-4z" fill="#16457c"/><path d="M7.500 10h4v4h-4z" fill="#f25022"/><path d="M12.500 10h4v4h-4z" fill="#7fba00"/><path d="M7.500 15h4v4h-4z" fill="#00a4ef"/><path d="M12.500 15h4v4h-4z" fill="#ffb900"/></svg></div>
    <div class="run"><svg viewBox="0 0 24 24"><circle cx="12" cy="12" r="12" fill="#fbc116"/><path d="M12 12L1.600 6A12 12 0 0 1 22.400 6z" fill="#e33b2e"/><path d="M12 12L1.600 6A12 12 0 0 0 11 24l6-9z" fill="#279847"/><circle cx="12" cy="12" r="5.800" fill="#fff"/><circle cx="12" cy="12" r="4.500" fill="#3c7de6"/></svg></div>
    <div><svg viewBox="0 0 24 24"><path d="M0 0h24v24H0z" fill="#e3170d"/><path d="M9 5v14h8" fill="none" stroke="#6b0905" stroke-width="3"/><path d="M10 4v13.500h7" fill="none" stroke="#fff" stroke-width="3"/></svg></div>
    <div><svg viewBox="0 0 24 24"><rect width="24" height="24" rx="3.500" fill="#eb7420"/><path d="M7.500 6c-3 0-3 5 0 6-3 1-3 6 0 6s3-6 4.500-6 1.500 6 4.500 6 3-5 0-6c3-1 3-6 0-6S13.500 12 12 12 10.500 6 7.500 6z" fill="none" stroke="#fff" stroke-width="2.400" stroke-linejoin="round"/></svg></div>
    <div class="run active"><svg viewBox="0 0 24 24"><path d="M2 1h14v14H2z" fill="#f7f7f7"/><path d="M2.500 13V3H13" fill="none" stroke="#d9391f" stroke-width="3.500" stroke-dasharray="3 .7"/><path d="M14.500 4v10.500l5 5M7 15h12" fill="none" stroke="#8b98a5" stroke-width="2.200"/><circle cx="21" cy="13.500" r="2.400" fill="none" stroke="#2a9fe0" stroke-width="1.700"/><circle cx="14" cy="21" r="2.400" fill="none" stroke="#2a9fe0" stroke-width="1.700"/></svg></div>
    <div class="run"><svg viewBox="0 0 24 24"><path d="M1 0l11 5.500L23 0v18l-11 6-11-6z" fill="#c22f30"/><path d="M6 8l6 3.500L18 8v7.500L12 19l-6-3.500z" fill="#ecdfd8"/></svg></div>
    <div class="run"><svg viewBox="0 0 24 24"><rect y="3" width="24" height="18.500" rx="1.500" fill="#333"/><path d="M0 4.500Q0 3 1.500 3h21Q24 3 24 4.500V6H0z" fill="#999"/><path d="M4 9.500l4 3.500-4 3.500M11 17.500h7" fill="none" stroke="#fff" stroke-width="1.900"/></svg></div>
    <div class="run"><svg viewBox="0 0 24 24"><circle cx="12" cy="12" r="12" fill="#6b35a0"/><circle cx="12" cy="12" r="9.500" fill="#f4eef9"/><path d="M9 22v-4c-3 .5-4-1-4.500-2.500 2 0 2 1.500 4.500 1 0-1 .5-1.500 1-2-4-.5-5-3-5-5 0-1.500.5-2.500 1.200-3.200C6 5 6.200 4 6.500 3.500c1.500 0 2.500.800 3.500 1.500h4c1-.700 2-1.500 3.500-1.500.300.500.500 1.500.300 2.800C18.500 7 19 8 19 9.500c0 2-1 4.500-5 5 .700.700 1 1.500 1 2.500v5z" fill="#6b35a0"/></svg></div>
    <div class="run"><svg viewBox="0 0 24 24"><path d="M2 2h21v21H2z" fill="#bbb"/><path d="M1.500 1h20.500v21H1.500z" fill="#fff" stroke="#ccc" stroke-width=".5"/><use href="#tableau" x="2.500" y="2" width="19" height="19"/></svg></div>
  </div>
  <div class="clock">1:59 PM<br>12/12/2024</div>
</div>
</body>
</html>
```
FILE: styles.css
```css
* { box-sizing: border-box; }
body {
  margin: 0; width: 1909px; height: 1062px; overflow: hidden;
  display: flex; flex-direction: column; background: #f4f4f4; color: #333;
  font: 13px/20px "Open Sans", "Noto Sans", sans-serif;
}
svg { display: block; flex: none; }
p, h1, h2, ul { margin: 0; padding: 0; }
i { font-style: normal; }
.defs { position: absolute; width: 0; height: 0; }

.titlebar { height: 19px; flex: none; background: #f3f3f3; display: flex; align-items: flex-start; overflow: hidden; }
.app-icon { width: 16px; height: 13px; background: #fff; border: 1px solid #aaa; border-width: 0 2px 2px 0; overflow: hidden; flex: none; }
.app-icon svg { margin: -8px 0 0 -6px; }
.title { margin: -9px 0 0 10px; font-size: 16.750px; line-height: 24px; color: #959595; white-space: nowrap; flex: none; }
.win { margin-left: auto; margin-right: 24px; }

.menubar { height: 20px; flex: none; background: #fff; display: flex; gap: 16px; font-size: 11.300px; letter-spacing: -0.02px; line-height: 21px; color: #999; }
.menubar span:first-child { margin-left: -2px; }

.toolbar { height: 62px; flex: none; display: flex; align-items: center; border-bottom: 1px solid #d4d4d4; }
.tool { width: 24px; height: 24px; fill: none; stroke: #666; stroke-width: 1.2; }
.tool .bold { stroke: #333; stroke-width: 2.2; }
.tool .fill { fill: #666; stroke: none; }
.tool.off { stroke: #b8b8b8; }
.tool.dark { stroke: #444; stroke-width: 1.4; }
.tool path[fill] { stroke: none; }
.caret { width: 8px; height: 8px; color: #555; }
.caret.off { color: #b0b0b0; }
.sep { width: 1px; height: 36px; background: #d0d0d0; flex: none; }
.tbtn { width: 45px; height: 45px; flex: none; background: #e6e6e6; display: flex; align-items: center; justify-content: center; color: #333; padding: 0 2px 2px 0; }
.select { width: 153px; height: 34px; flex: none; border: 1px solid #c8c8c8; border-radius: 2px; background: #f8f8f8; display: flex; color: #444; line-height: 32px; }
.select span { flex: 1; padding-left: 7px; letter-spacing: -0.1px; }
.select i { width: 19px; border-left: 1px solid #e0e0e0; display: flex; align-items: center; justify-content: center; color: #555; }
.push { margin-left: auto; }
.showme-tab { width: 151px; height: 55px; flex: none; align-self: flex-end; margin-right: 2px; margin-bottom: -1px; background: #fafafa; border: 1px solid #dcdcdc; border-bottom: 0; border-right: 2px solid #c8c8c8; display: flex; align-items: center; gap: 6px; padding: 0 0 10px 15px; font-size: 13.400px; letter-spacing: -0.3px; color: #222; position: relative; z-index: 2; }
.g9 { margin-left: 9px; } .g10 { margin-left: 10px; } .g12 { margin-left: 12px; } .g13 { margin-left: 13px; }
.g14 { margin-left: 14px; } .g15 { margin-left: 15px; } .g16 { margin-left: 16px; } .g18 { margin-left: 18px; }
.g19 { margin-left: 19px; } .g20 { margin-left: 20px; } .g21 { margin-left: 21px; } .g22 { margin-left: 22px; }
.g23 { margin-left: 23px; } .g24 { margin-left: 24px; } .g27 { margin-left: 27px; }

.workspace { height: 855px; flex: none; display: flex; position: relative; }

.sidebar { width: 305px; flex: none; background: #fff; border-right: 1px solid #d4d4d4; }
.side-tabs { display: flex; height: 39px; line-height: 37px; }
.side-tabs b { width: 110px; padding-left: 17px; font-size: 13px; font-weight: 600; color: #000; }
.side-tabs span { flex: 1; display: flex; align-items: center; justify-content: space-between; padding: 0 7px 0 18px; background: #fafafa; border-left: 1px solid #d4d4d4; border-bottom: 1px solid #d4d4d4; font-size: 13.200px; }
.source { height: 44px; display: flex; align-items: flex-start; gap: 5px; padding: 8px 0 0 12px; line-height: 16px; font-size: 12.100px; color: #444; border-bottom: 1px solid #e4e4e4; }
.search-row { display: flex; align-items: center; margin: 11px 0 0 2px; height: 34px; }
.search { width: 223px; height: 34px; border: 1px solid #c8c8c8; border-radius: 2px; display: flex; align-items: center; justify-content: space-between; padding: 0 6px; color: #aaa; margin-right: 5px; font-size: 12.500px; }
.search-row i { width: 1px; height: 27px; background: #d4d4d4; margin: 0 7px 0 6px; }
.search-row .dd { margin-left: 7px; color: #444; }
.sidebar h2 { font-size: 13.200px; font-weight: 600; color: #111; padding: 13px 0 10px 17px; line-height: 20px; }
.fields { list-style: none; }
.fields li { height: 21px; line-height: 20px; display: flex; align-items: center; padding-left: 20px; position: relative; color: #222; font-size: 12.600px; letter-spacing: -0.05px; }
.fields li > svg { width: 12px; height: 12px; margin-right: 12px; }
.fields li > b { width: 26px; margin-left: -2px; font-size: 9.500px; font-weight: 600; }
.dims svg, .dims b, .dims u { color: #3683a5; }
.measures svg, .measures u { color: #3f9f7a; }
.fields u { position: absolute; left: 13px; text-decoration: none; font-size: 8px; font-weight: 600; }
.fields em { letter-spacing: 0.15px; }
.measures { border-top: 1px solid #ddd; margin: 0 6px 0 12px; padding-top: 1px; }
.measures li { padding-left: 8px; }
.measures u { left: 4px; }

.cards { width: 166px; flex: none; padding-left: 6px; margin-top: -1px; }
.card { width: 154px; border: 1px solid #d4d4d4; background: #fafafa; padding: 5px 7px 5px 6px; font-size: 12.200px; color: #444; }
.pages { height: 75px; margin-bottom: 5px; }
.filters { height: 90px; margin-bottom: 6px; }
.marks { height: 297px; }
.mark-type { display: flex; align-items: center; width: 140px; height: 21px; margin-top: 10px; border: 1px solid #c8c8c8; border-radius: 2px; color: #666; padding-left: 10px; }
.mark-type span { flex: 1; padding-left: 5px; font-size: 11.800px; }
.mark-type i { width: 19px; height: 19px; border-left: 1px solid #ddd; display: flex; align-items: center; justify-content: center; color: #555; }
.mark-grid { display: grid; grid-template-columns: 43px 42px 43px; gap: 6px; margin: 6px 0 15px; width: 142px; }
.mark-grid div { height: 42px; border: 1px solid #d0d0d0; display: flex; flex-direction: column; align-items: center; padding-top: 3px; font-size: 9.800px; line-height: 13px; color: #333; }
.mark-grid svg { width: 22px; height: 22px; margin-bottom: 1px; }
.pill-row { display: flex; align-items: center; height: 26px; margin-bottom: 3px; padding-left: 7px; gap: 4px; }
.pill-row svg { width: 14px; height: 14px; }
.pill { width: 111px; height: 26px; border-radius: 13px; background: #4996b2; color: #fff; font-size: 18.500px; line-height: 26px; padding-left: 14px; font-weight: 500; }
.pill.green { background: #00b180; font-size: 19px; }

.canvas { flex: 1; margin-top: -1px; }
.shelf { height: 34px; border: 1px solid #d4d4d4; background: #fafafa; margin-bottom: 6px; }
.shelf div { width: 125px; height: 32px; border-right: 1px solid #d4d4d4; display: flex; align-items: center; gap: 8px; padding-left: 6px; font-size: 12.100px; color: #444; }
.shelf + .shelf div { gap: 7px; }
.view-row { display: flex; gap: 6px; }
.view { width: 1273px; height: 770px; background: #fff; border: 1px solid #d4d4d4; padding: 11px 0 0 8px; }
.view h1 { font-size: 29px; line-height: 40px; height: 43px; padding-left: 1px; font-weight: 300; color: #333; letter-spacing: 1.1px; }
.bubbles { font-size: 18px; font-weight: 300; text-anchor: middle; letter-spacing: 0.55px; }
.d text { fill: #000; }
.l text { fill: #fff; }
.legend { width: 154px; height: 770px; background: #fff; border: 1px solid #d4d4d4; display: flex; overflow: hidden; }
.legend-list { flex: 1; align-self: flex-end; height: 40px; }
.legend-list p { height: 26px; line-height: 26px; padding-left: 5px; display: flex; align-items: center; gap: 7px; font-size: 18px; font-weight: 300; letter-spacing: 0.5px; white-space: nowrap; }
.legend-list i { width: 14px; height: 14px; }
.sw-vale { background: #d4a6c8; } .sw-wen { background: #e15759; }
.scroll { width: 16px; background: #f0f0f0; margin-right: 2px; }

.showme { position: absolute; left: 1600px; top: -1px; width: 307px; height: 826px; background: #fafafa; border: 1px solid #dcdcdc; border-right: 2px solid #c8c8c8; box-shadow: 2px 2px 3px rgba(0,0,0,.25); padding: 31px 0 0 21px; color: #222; clip-path: inset(0 -6px -6px 0); }
.thumbs { display: grid; grid-template-columns: repeat(3, 56px); gap: 27px 34px; padding-left: 13px; }
.thumbs svg { width: 56px; height: 42px; border: 1px solid #ddd; background: #fff; }
.thumbs svg.on { border: 2px solid #dc6b33; }
.tiny { font-size: 14px; fill: #555; }
.rings { fill: none; stroke-width: 3; }
.lines { fill: none; stroke-width: 4; }
.hint { margin-top: 34px; font-size: 12.800px; letter-spacing: -0.05px; }
.hint b { font-weight: 600; color: #111; }
.need { display: flex; align-items: flex-start; height: 30px; font-size: 12.700px; margin-top: 6px; white-space: nowrap; }
.need > span:first-child { line-height: 37px; width: 60px; letter-spacing: -0.05px; }
.need + .need { margin-top: 12px; }
.pill.big { height: 30px; border-radius: 15px; line-height: 30px; width: 136px; padding-left: 15px; margin-left: 1px; font-size: 18.300px; }
.pill.big.ms { width: 118px; }

.sheets { height: 31px; flex: none; background: #e6e6e6; border-top: 1px solid #c8c8c8; border-bottom: 1px solid #d0d0d0; display: flex; line-height: 29px; font-size: 12.200px; color: #666; }
.sheets > span, .sheets > b { border-right: 1px solid #c4c4c4; white-space: nowrap; }
.ds { width: 186px; display: flex; align-items: center; gap: 6px; letter-spacing: -0.1px; }
.s1 { width: 58px; padding-left: 6px; } .s2 { width: 110px; padding-left: 5px; } .s3 { width: 81px; padding-left: 5px; }
.sheets > b { width: 123px; padding-left: 5px; background: #fafafa; color: #444; font-size: 12px; line-height: 27px; letter-spacing: -0.2px; }
.add { width: 32px; display: flex; align-items: center; justify-content: center; }
.add svg { width: 16px; height: 16px; fill: none; stroke: #777; }
.add .bold { stroke: #666; stroke-width: 2; }

.status { height: 31px; flex: none; background: #ebebeb; border-bottom: 1px solid #b5b5b5; display: flex; line-height: 29px; font-size: 11.500px; color: #333; white-space: nowrap; }
.status > span:first-child { margin-left: -5px; width: 65px; letter-spacing: -0.2px; }
.status .rowcol { width: 110px; letter-spacing: -0.3px; }
.status .sum { letter-spacing: 0.2px; }
.status-right { margin-left: auto; display: flex; }
.status-right i, .nav, .modes { border-left: 1px solid #c8c8c8; display: flex; align-items: center; }
.w189 { width: 189px; } .w39 { width: 39px; } .w68 { width: 69px; }
.nav { width: 73px; padding-left: 9px; } .modes { width: 74px; padding-left: 10px; }

.taskbar { flex: 1; display: flex; align-items: center; font-size: 11.500px; line-height: 16px; color: #222;
  background: linear-gradient(90deg, #e7e5df 0, #eaddd9 170px, #e8e0dd 320px, #e4e4ea 440px, #e8dedb 600px, #ecdcd3 760px, #ecdecc 900px, #f0dde4 1030px, #f0dfe0 1110px, #ede0cf 1220px, #ebdfdd 1400px, #e9e2db 1600px, #e9dfd6 1750px, #f1e7dd 1909px); }
.weather { display: flex; gap: 2px; padding-left: 11px; width: 519px; align-items: center; flex: none; }
.weather svg { margin-top: -4px; }
.weather div { margin-top: 1px; }
.weather span { color: #555; }
.start { margin-top: 0; }
.tsearch { width: 218px; height: 31px; margin: -2px 0 0 13px; flex: none; border-radius: 16px; background: #faf5f2; border-bottom: 1px solid #ccbfb8; display: flex; align-items: center; gap: 10px; padding: 3px 0 0 11px; font-size: 12.800px; color: #555; }
.flower { margin: -3px 12px 0 auto; }
.apps { display: flex; margin-left: 2px; height: 44px; flex: none; }
.apps div { width: 44px; height: 44px; display: flex; justify-content: center; align-items: flex-start; padding-top: 11px; position: relative; }
.apps svg { width: 24px; height: 24px; }
.run::after { content: ""; position: absolute; left: 19px; top: 39px; width: 6px; height: 3px; border-radius: 2px; background: #8a8380; }
.run.active::after { left: 15px; width: 14px; }
.run.active { background: rgba(255,255,255,.25); border-radius: 4px; }
.clock { margin-left: auto; margin-right: 22px; margin-top: 2px; text-align: right; color: #444; letter-spacing: 0.15px; }
```
